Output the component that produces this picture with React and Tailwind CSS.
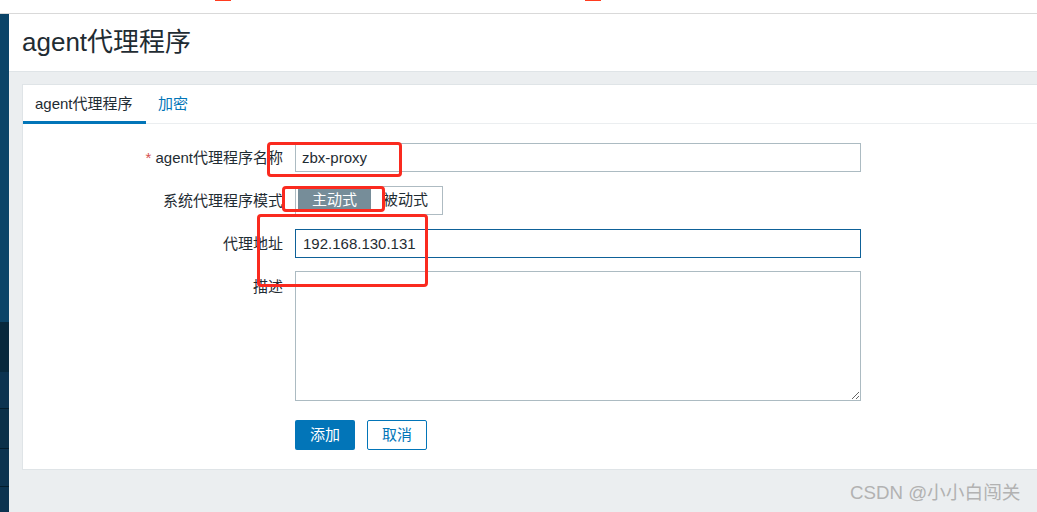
export default function App() {
  const font = { fontFamily: '"Liberation Sans", Arial, "Noto Sans CJK SC", sans-serif' };

  return (
    <div
      style={font}
      className="relative w-[1037px] h-[512px] overflow-hidden flex flex-col bg-[#ebeef0] text-[#1f2c33]"
    >
      {/* top strip (cut-off page above) */}
      <div className="relative h-[14px] shrink-0 bg-white border-b border-[#d9d9d9]">
        <div className="absolute left-[215px] top-0 w-[16px] h-[1px] bg-[#ff3b1f]" />
        <div className="absolute left-[585px] top-0 w-[16px] h-[1px] bg-[#ff3b1f]" />
      </div>

      <div className="flex flex-1 min-h-0">
        {/* sidebar */}
        <div className="w-[9px] shrink-0 flex flex-col bg-[#0b4266]">
          <div className="h-[308px] bg-[#0b4468]" />
          <div className="h-[50px] bg-[#08283c]" />
          <div className="h-[37px] bg-[#0c3350] border-b border-[#041c2b]" />
          <div className="h-[40px] bg-[#0b3049] border-b border-[#041c2b]" />
          <div className="h-[38px] bg-[#0c3350] border-b border-[#041c2b]" />
          <div className="flex-1 bg-[#0c3350]" />
        </div>

        <div className="flex-1 flex flex-col">
          {/* page header */}
          <div className="h-[58px] shrink-0 bg-white border-b border-[#dfe4e7] pl-[13px] flex items-center">
            <h1 className="text-[26px] leading-none -mt-[1px]">agent代理程序</h1>
          </div>

          <div className="pl-[13px] pt-[12px]">
            <div className="bg-white border border-r-0 border-[#dfe4e7]">
              {/* tabs */}
              <div className="flex h-[39px] border-b border-[#ebeef0] text-[15px]">
                <div className="h-[39px] px-[12px] flex items-center border-b-[3px] border-[#0275b8] pt-[2px] w-[123px]">
                  agent代理程序
                </div>
                <div className="h-[38px] px-[12px] flex items-center text-[#0275b8]">加密</div>
              </div>

              {/* form */}
              <div className="pt-[19px] pb-[19px] text-[15px] flex flex-col gap-[14px]">
                <div className="flex items-center">
                  <label className="w-[260px] text-right leading-[29px]">
                    <span className="text-[#d64e4e]">*</span> agent代理程序名称
                  </label>
                  <input
                    type="text"
                    defaultValue="zbx-proxy"
                    className="ml-[12px] w-[566px] h-[29px] border border-[#acbbc2] px-[6px] text-[15px] text-[#1f2c33] outline-none"
                  />
                </div>

                <div className="flex items-center">
                  <label className="w-[260px] text-right leading-[29px]">系统代理程序模式</label>
                  <div className="ml-[12px] flex h-[29px] w-[148px] border border-[#aebbc2] p-[2px]">
                    <span className="w-[73px] flex items-center justify-center bg-[#768d99] text-white">主动式</span>
                    <span className="flex-1 flex items-center justify-center">被动式</span>
                  </div>
                </div>

                <div className="flex items-center">
                  <label className="w-[260px] text-right leading-[29px]">代理地址</label>
                  <input
                    type="text"
                    defaultValue="192.168.130.131"
                    className="ml-[12px] w-[566px] h-[29px] border border-[#0e6198] px-[7px] text-[15px] text-[#1f2c33] outline-none"
                  />
                </div>

                <div className="flex items-start -mt-[1px]">
                  <label className="w-[260px] text-right leading-[29px] pt-[1px]">描述</label>
                  <textarea className="ml-[12px] w-[566px] h-[130px] border border-[#acbbc2] outline-none" />
                </div>

                <div className="flex items-center gap-[12px] pl-[272px] mt-[5px]">
                  <button className="w-[60px] h-[30px] rounded-[2px] bg-[#0275b8] text-white text-[15px]">添加</button>
                  <button className="w-[60px] h-[30px] rounded-[2px] border border-[#0275b8] bg-white text-[#0275b8] text-[15px]">
                    取消
                  </button>
                </div>
              </div>
            </div>
          </div>
        </div>
      </div>

      {/* red annotation boxes */}
      <div className="absolute left-[267px] top-[142px] w-[135px] h-[35px] border-[3px] border-[#fa2a1f] rounded-[4px]" />
      <div className="absolute left-[282px] top-[186px] w-[103px] h-[26px] border-[3px] border-[#fa2a1f] rounded-[4px]" />
      <div className="absolute left-[257px] top-[214px] w-[171px] h-[73px] border-[3px] border-[#fa2a1f] rounded-[4px]" />

      {/* watermark */}
      <div className="absolute left-[850px] top-[481px] text-[18.7px] leading-[24px] text-[#b2b2b2]">
        CSDN @小小白闯关
      </div>
    </div>
  );
}
